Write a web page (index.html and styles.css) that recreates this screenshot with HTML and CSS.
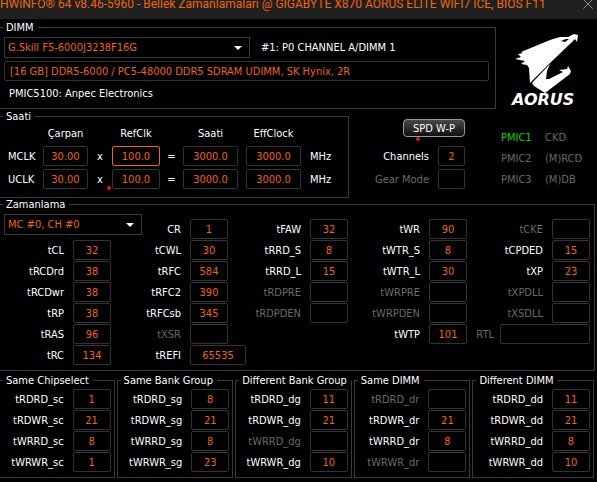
FILE: index.html
```
<!DOCTYPE html>
<html lang="tr">
<head>
<meta charset="utf-8">
<title>HWiNFO</title>
<link rel="stylesheet" href="styles.css">
</head>
<body>
<header class="titlebar">
  <h1>HWiNFO® 64 v8.46-5960 - Bellek Zamanlamaları @ GIGABYTE X870 AORUS ELITE WIFI7 ICE, BIOS F11</h1>
  <button class="close" aria-label="Kapat"><svg width="10" height="10" viewBox="0 0 10 10"><path d="M0.5 0.5L9.5 9.5M9.5 0.5L0.5 9.5" stroke="#8a8a8a" fill="none"/></svg></button>
</header>
<main>
  <div class="top">
    <fieldset class="group dimm">
      <legend>DIMM</legend>
      <div class="module">
        <div class="combo"><select aria-label="DIMM"><option>G.Skill F5-6000J3238F16G</option></select></div>
        <span>#1: P0 CHANNEL A/DIMM 1</span>
      </div>
      <input class="description" aria-label="Modül" readonly value="[16 GB] DDR5-6000 / PC5-48000 DDR5 SDRAM UDIMM, SK Hynix, 2R">
      <p>PMIC5100: Anpec Electronics</p>
    </fieldset>
    <svg class="logo" width="72" height="76" viewBox="0 0 72 76" role="img" aria-label="AORUS">
      <path fill="#fff" d="M12 19L41 7L51 4L59 4L65 1L69 2L68 9L66 6L62 10L41 30L21 50L20 35L18 32L12 31L16 28L6 26L12 24L9 21L14 20Z"/>
      <path fill="#000" d="M52 8L57 6L60 6L56 9Z"/>
      <path fill="#fff" d="M41 31L38 38L37 46L40 46L54 39L50 37L58 36L59 33L62 38L61 41L36 60L25 53L23 50Z"/>
      <text x="3" y="72" fill="#fff">AORUS</text>
    </svg>
  </div>

  <div class="middle">
    <fieldset class="group">
      <legend>Saati</legend>
      <div class="clocks">
        <span></span><b>Çarpan</b><span></span><b>RefClk</b><span></span><b>Saati</b><b>EffClock</b><span></span>
        <span>MCLK</span><input aria-label="MCLK Çarpan" readonly value="30.00"><i>x</i><input class="active" aria-label="MCLK RefClk" readonly value="100.0"><i>=</i><input aria-label="MCLK Saati" readonly value="3000.0"><input aria-label="MCLK EffClock" readonly value="3000.0"><span>MHz</span>
        <span>UCLK</span><input aria-label="UCLK Çarpan" readonly value="30.00"><i class="dotted">x</i><input aria-label="UCLK RefClk" readonly value="100.0"><i>=</i><input aria-label="UCLK Saati" readonly value="3000.0"><input aria-label="UCLK EffClock" readonly value="3000.0"><span>MHz</span>
      </div>
    </fieldset>
    <div class="mode">
      <button class="spd">SPD W-P</button>
      <label class="field"><span>Channels</span><input readonly value="2"></label>
      <label class="field off"><span>Gear Mode</span><input readonly></label>
    </div>
    <div class="devices">
      <span class="on">PMIC1</span><span>CKD</span>
      <span>PMIC2</span><span>(M)RCD</span>
      <span>PMIC3</span><span>(M)DB</span>
    </div>
  </div>

  <fieldset class="group timing">
    <legend>Zamanlama</legend>
    <div class="combo channel"><select aria-label="Kanal"><option>MC #0, CH #0</option></select></div>
    <div class="columns">
      <div class="column first">
        <label class="field"><span>tCL</span><input readonly value="32"></label>
        <label class="field"><span>tRCDrd</span><input readonly value="38"></label>
        <label class="field"><span>tRCDwr</span><input readonly value="38"></label>
        <label class="field"><span>tRP</span><input readonly value="38"></label>
        <label class="field"><span>tRAS</span><input readonly value="96"></label>
        <label class="field"><span>tRC</span><input readonly value="134"></label>
      </div>
      <div class="column">
        <label class="field"><span>CR</span><input readonly value="1"></label>
        <label class="field"><span>tCWL</span><input readonly value="30"></label>
        <label class="field"><span>tRFC</span><input readonly value="584"></label>
        <label class="field"><span>tRFC2</span><input readonly value="390"></label>
        <label class="field"><span>tRFCsb</span><input readonly value="345"></label>
        <label class="field off"><span>tXSR</span><input readonly></label>
        <label class="field refi"><span>tREFI</span><input readonly value="65535"></label>
      </div>
      <div class="column">
        <label class="field"><span>tFAW</span><input readonly value="32"></label>
        <label class="field"><span>tRRD_S</span><input readonly value="8"></label>
        <label class="field"><span>tRRD_L</span><input readonly value="15"></label>
        <label class="field off"><span>tRDPRE</span><input readonly></label>
        <label class="field off"><span>tRDPDEN</span><input readonly></label>
      </div>
      <div class="column">
        <label class="field"><span>tWR</span><input readonly value="90"></label>
        <label class="field"><span>tWTR_S</span><input readonly value="8"></label>
        <label class="field"><span>tWTR_L</span><input readonly value="30"></label>
        <label class="field off"><span>tWRPRE</span><input readonly></label>
        <label class="field off"><span>tWRPDEN</span><input readonly></label>
        <label class="field"><span>tWTP</span><input readonly value="101"></label>
      </div>
      <div class="column">
        <label class="field off"><span>tCKE</span><input readonly></label>
        <label class="field"><span>tCPDED</span><input readonly value="15"></label>
        <label class="field"><span>tXP</span><input readonly value="23"></label>
        <label class="field off"><span>tXPDLL</span><input readonly></label>
        <label class="field off"><span>tXSDLL</span><input readonly></label>
        <label class="field off rtl"><span>RTL</span><input readonly></label>
      </div>
    </div>
  </fieldset>

  <div class="turnarounds">
    <fieldset class="group">
      <legend>Same Chipselect</legend>
      <div class="column">
        <label class="field"><span>tRDRD_sc</span><input readonly value="1"></label>
        <label class="field"><span>tRDWR_sc</span><input readonly value="21"></label>
        <label class="field"><span>tWRRD_sc</span><input readonly value="8"></label>
        <label class="field"><span>tWRWR_sc</span><input readonly value="1"></label>
      </div>
    </fieldset>
    <fieldset class="group">
      <legend>Same Bank Group</legend>
      <div class="column">
        <label class="field"><span>tRDRD_sg</span><input readonly value="8"></label>
        <label class="field"><span>tRDWR_sg</span><input readonly value="21"></label>
        <label class="field"><span>tWRRD_sg</span><input readonly value="8"></label>
        <label class="field"><span>tWRWR_sg</span><input readonly value="23"></label>
      </div>
    </fieldset>
    <fieldset class="group">
      <legend>Different Bank Group</legend>
      <div class="column">
        <label class="field"><span>tRDRD_dg</span><input readonly value="11"></label>
        <label class="field"><span>tRDWR_dg</span><input readonly value="21"></label>
        <label class="field off"><span>tWRRD_dg</span><input readonly></label>
        <label class="field"><span>tWRWR_dg</span><input readonly value="10"></label>
      </div>
    </fieldset>
    <fieldset class="group">
      <legend>Same DIMM</legend>
      <div class="column">
        <label class="field off"><span>tRDRD_dr</span><input readonly></label>
        <label class="field"><span>tRDWR_dr</span><input readonly value="21"></label>
        <label class="field"><span>tWRRD_dr</span><input readonly value="8"></label>
        <label class="field off"><span>tWRWR_dr</span><input readonly></label>
      </div>
    </fieldset>
    <fieldset class="group">
      <legend>Different DIMM</legend>
      <div class="column">
        <label class="field"><span>tRDRD_dd</span><input readonly value="11"></label>
        <label class="field"><span>tRDWR_dd</span><input readonly value="21"></label>
        <label class="field"><span>tWRRD_dd</span><input readonly value="8"></label>
        <label class="field"><span>tWRWR_dd</span><input readonly value="10"></label>
      </div>
    </fieldset>
  </div>
</main>
</body>
</html>
```
FILE: styles.css
```
* { box-sizing: border-box; }

body {
  margin: 0;
  background: #000;
  color: #fff;
  font: 11px/13px "DejaVu Sans Condensed", "DejaVu Sans", sans-serif;
}

input, select, button { font: inherit; margin: 0; }

.titlebar {
  display: flex;
  justify-content: space-between;
  height: 19px;
  padding-right: 4px;
  background: #202020;
  overflow: hidden;
}
.titlebar h1 {
  margin: -6px 0 0;
  color: #f0640a;
  font: 12px/20px Roboto, sans-serif;
  white-space: nowrap;
}
.close { height: 10px; margin-top: -1px; padding: 0; border: 0; background: none; line-height: 0; }

main { padding-top: 2px; }

.group {
  position: relative;
  min-width: 0;
  margin: 0;
  border: 1px solid #3a3a3a;
}
.group legend { padding: 0 4px 0 3px; white-space: nowrap; }
.dimm, .timing, .middle .group, .turnarounds .group:first-child { border-left: 0; }

.top { display: grid; grid-template-columns: 496fr 101fr; }
.dimm { padding: 3px 6px 8px 4px; }
.dimm legend { margin-left: -1px; }
.module { display: flex; align-items: center; gap: 11px; }
.module .combo { flex: 0 1 246px; }
.dimm p { margin: 6px 0 0 5px; }

.combo { position: relative; }
.combo::after {
  content: "";
  position: absolute;
  right: 8px;
  top: 9px;
  border: 4px solid transparent;
  border-top-color: #fff;
  border-bottom: 0;
}
select {
  display: block;
  width: 100%;
  height: 21px;
  padding: 0 3px;
  appearance: none;
  border: 1px solid #3a3a3a;
  border-radius: 0;
  background: #000;
  color: #f0640a;
}

input {
  width: 38px;
  height: 20px;
  padding: 0;
  border: 1px solid #333;
  border-radius: 2px;
  outline: 0;
  background: #000;
  color: #f0640a;
  text-align: center;
}
.description { display: block; width: 100%; margin-top: 3px; padding: 0 5px; text-align: left; }

.logo { margin: 12px 0 0 13px; }
.logo text { font: italic bold 16px "DejaVu Sans", sans-serif; }

.middle {
  display: grid;
  grid-template-columns: 349fr 116fr 132fr;
  margin-top: 1px;
}
.middle .group { padding: 0 3px; }
.clocks {
  display: grid;
  grid-template-columns: 40px 45px 24px 48px 23px 55px 8px 55px 1fr;
  grid-template-rows: 20px 20px 20px;
  row-gap: 3px;
  align-items: center;
  padding-bottom: 8px;
}
.clocks b, .clocks i { font-weight: normal; font-style: normal; text-align: center; }
.clocks input { width: 100%; }
.clocks span { padding-left: 5px; }
.clocks > :nth-child(8n + 7) { grid-column: 8; }
.clocks > :nth-child(8n) { padding-left: 9px; }
.clocks .active { border-color: #f0640a; }

.dotted, .spd { position: relative; }
.dotted::after, .spd::after {
  content: "";
  position: absolute;
  width: 4px;
  height: 4px;
  border-radius: 50%;
  background: #e01818;
}
.dotted::after { right: 1px; bottom: -4px; }
.spd::after { left: 12px; bottom: -5px; }

.mode { display: flex; flex-direction: column; gap: 3px; padding-top: 9px; }
.spd {
  align-self: flex-end;
  width: 62px;
  height: 18px;
  margin-bottom: 6px;
  padding: 0;
  border: 1px solid #999;
  border-radius: 4px;
  background: linear-gradient(#484848, #101010);
  color: #fff;
}
.mode input { width: 27px; }

.devices {
  display: grid;
  grid-template-columns: 44px 1fr;
  grid-auto-rows: 21px;
  align-items: center;
  padding: 17px 0 0 36px;
  color: #6a6a6a;
}
.devices .on { color: #00d800; }

.field { display: flex; align-items: center; gap: 9px; }
.field span { flex: 1; text-align: right; white-space: nowrap; }
.off { color: #6a6a6a; }
.column { display: flex; flex-direction: column; gap: 1px; }

.timing { margin: 0 2px 0 0; padding: 3px 4px 5px 0; }
.timing legend { margin-left: 3px; }
.channel {
  position: absolute;
  left: 4px;
  width: 138px;
}
.columns { display: grid; grid-template-columns: 111fr 117fr 120fr 119fr 123fr; padding-top: 5px; }
.first { padding-top: 21px; }
.refi { margin-right: -18px; }
.refi input { width: 56px; }
.rtl { gap: 6px; }
.rtl input { width: 90px; }

.turnarounds {
  display: grid;
  grid-template-columns: 115fr 117fr 117fr 117fr 122fr;
  column-gap: 2px;
  margin: 3px 3px 0 0;
}
.turnarounds .group { padding: 2px 3px 5px; }
```
